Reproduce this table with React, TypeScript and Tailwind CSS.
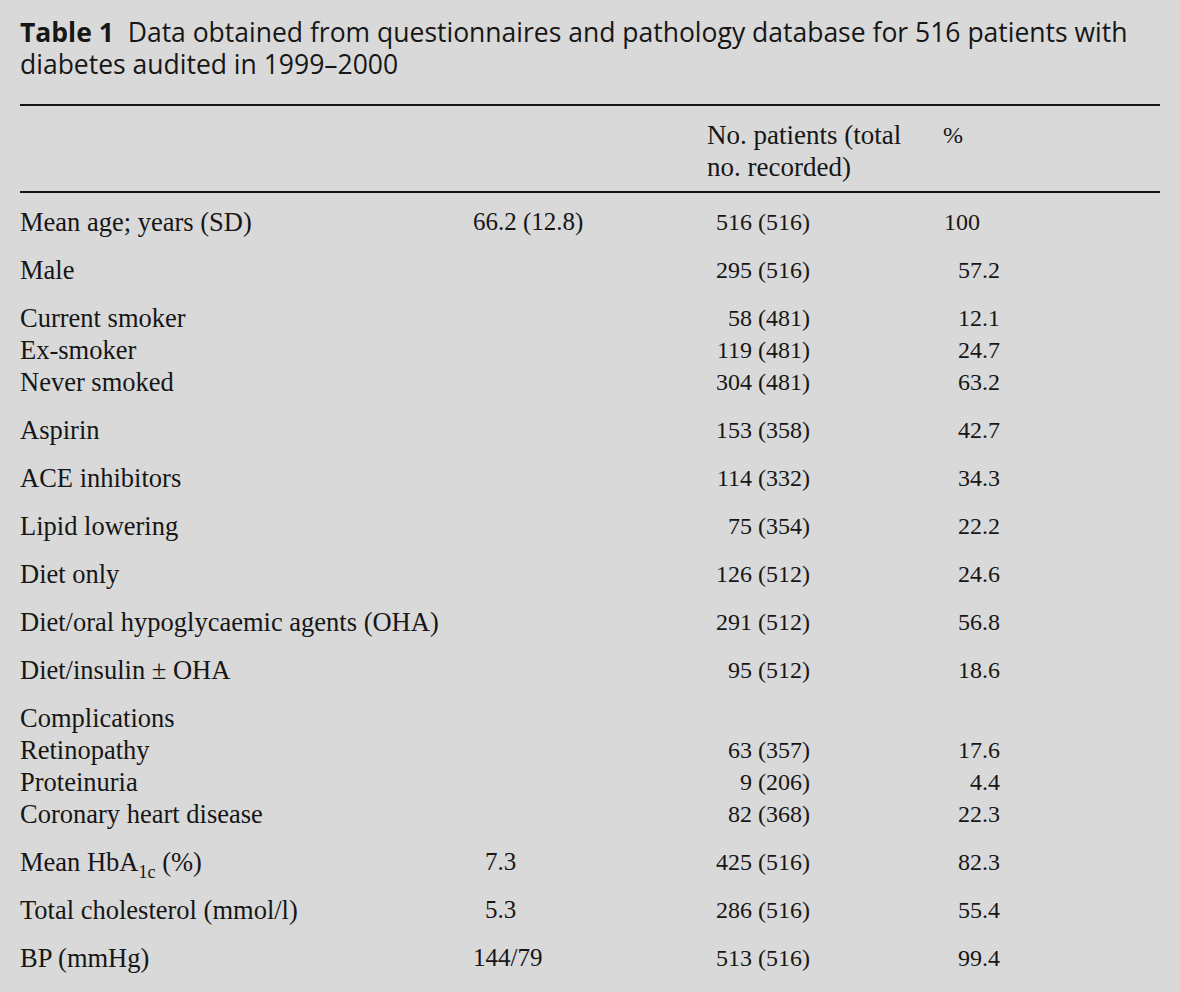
const serif = "font-['Liberation_Serif','Times_New_Roman',serif]";

type Row = {
  label: React.ReactNode;
  mean?: string;
  meanPad?: string;
  n?: string;
  pct?: string;
  pctPad?: string;
};

const groups: Row[][] = [
  [{ label: "Mean age; years (SD)", mean: "66.2 (12.8)", n: "516 (516)", pct: "100", pctPad: "pr-[20px]" }],
  [{ label: "Male", n: "295 (516)", pct: "57.2" }],
  [
    { label: "Current smoker", n: "58 (481)", pct: "12.1" },
    { label: "Ex-smoker", n: "119 (481)", pct: "24.7" },
    { label: "Never smoked", n: "304 (481)", pct: "63.2" },
  ],
  [{ label: "Aspirin", n: "153 (358)", pct: "42.7" }],
  [{ label: "ACE inhibitors", n: "114 (332)", pct: "34.3" }],
  [{ label: "Lipid lowering", n: "75 (354)", pct: "22.2" }],
  [{ label: "Diet only", n: "126 (512)", pct: "24.6" }],
  [{ label: "Diet/oral hypoglycaemic agents (OHA)", n: "291 (512)", pct: "56.8" }],
  [{ label: "Diet/insulin ± OHA", n: "95 (512)", pct: "18.6" }],
  [
    { label: "Complications" },
    { label: "Retinopathy", n: "63 (357)", pct: "17.6" },
    { label: "Proteinuria", n: "9 (206)", pct: "4.4" },
    { label: "Coronary heart disease", n: "82 (368)", pct: "22.3" },
  ],
  [
    {
      label: (
        <>
          Mean HbA<sub className="text-[18px] align-[-2px]">1c</sub> (%)
        </>
      ),
      mean: "7.3",
      meanPad: "pl-[12px]",
      n: "425 (516)",
      pct: "82.3",
    },
  ],
  [{ label: "Total cholesterol (mmol/l)", mean: "5.3", meanPad: "pl-[12px]", n: "286 (516)", pct: "55.4" }],
  [{ label: "BP (mmHg)", mean: "144/79", n: "513 (516)", pct: "99.4" }],
];

function DataRow({ row }: { row: Row }) {
  return (
    <div className="grid h-[32px] grid-cols-[453px_234px_213px_1fr] items-center">
      <div className="whitespace-nowrap text-[26.5px]">{row.label}</div>
      <div className={`text-[25px] whitespace-nowrap ${row.meanPad ?? ""}`}>{row.mean}</div>
      <div className="w-[103px] text-right text-[24px] whitespace-nowrap">{row.n}</div>
      <div className={`w-[80px] text-right text-[24px] ${row.pctPad ?? ""}`}>{row.pct}</div>
    </div>
  );
}

export default function App() {
  return (
    <div className="min-h-screen w-full bg-[#d9d9d9] px-5 pt-4 text-[#161616]">
      <h1 className="font-['Open_Sans','Noto_Sans',sans-serif] text-[26.5px] leading-[32px]">
        <span className="font-bold">Table 1</span>&nbsp; Data obtained from questionnaires and pathology database for 516 patients with
        diabetes audited in 1999–2000
      </h1>

      <div className={`mt-6 ${serif} leading-[32px]`}>
        <div className="border-t-2 border-[#161616]" />
        <div className="grid grid-cols-[453px_234px_213px_1fr] pt-[13px] pb-[8px] text-[27px]">
          <div />
          <div />
          <div className="whitespace-nowrap">
            No. patients (total
            <br />
            no. recorded)
          </div>
          <div className="pl-[23px] text-[24px]">%</div>
        </div>
        <div className="border-t-2 border-[#161616]" />

        <div className="flex flex-col gap-4 pt-[13px]">
          {groups.map((g, i) => (
            <div key={i}>
              {g.map((r, j) => (
                <DataRow key={j} row={r} />
              ))}
            </div>
          ))}
        </div>
      </div>
    </div>
  );
}
